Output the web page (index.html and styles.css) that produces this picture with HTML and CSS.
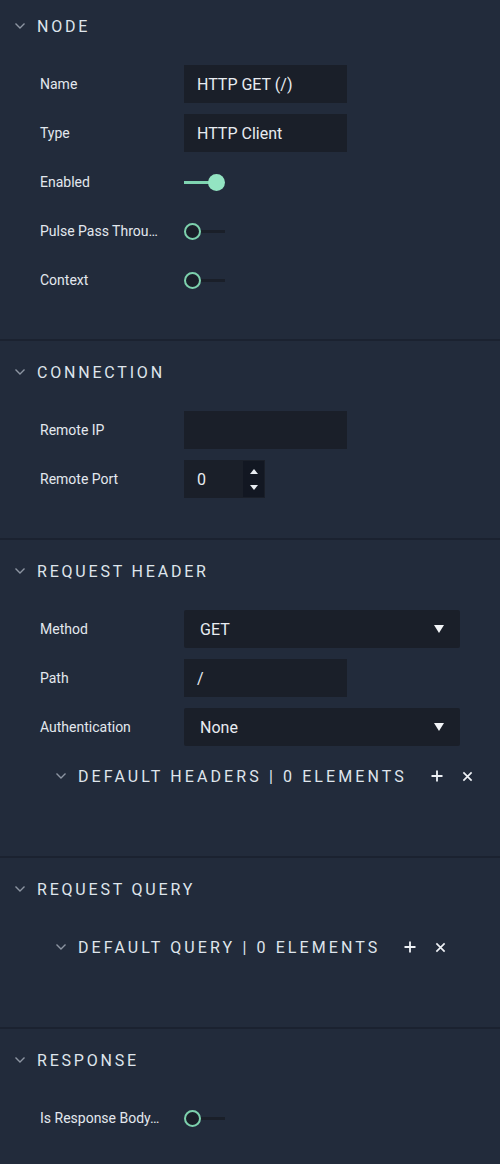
FILE: index.html
```html
<!DOCTYPE html>
<html lang="en">
<head>
<meta charset="utf-8">
<link rel="stylesheet" href="styles.css">
</head>
<body>
<div class="panel">
  <section class="section first">
    <div class="sec-head"><svg class="chev" viewBox="0 0 10 6"><path d="M0.5 0.5 L5 5 L9.5 0.5"/></svg><span class="sec-title">Node</span></div>
    <div class="rows">
      <div class="row"><span class="label">Name</span><div class="input">HTTP GET (/)</div></div>
      <div class="row"><span class="label">Type</span><div class="input">HTTP Client</div></div>
      <div class="row"><span class="label">Enabled</span><div class="toggle on"><span class="track"></span><span class="knob"></span></div></div>
      <div class="row"><span class="label">Pulse Pass Throu…</span><div class="toggle off"><span class="knob"></span><span class="track"></span></div></div>
      <div class="row"><span class="label">Context</span><div class="toggle off"><span class="knob"></span><span class="track"></span></div></div>
    </div>
  </section>
  <section class="section">
    <div class="sec-head"><svg class="chev" viewBox="0 0 10 6"><path d="M0.5 0.5 L5 5 L9.5 0.5"/></svg><span class="sec-title">Connection</span></div>
    <div class="rows">
      <div class="row"><span class="label">Remote IP</span><div class="input"></div></div>
      <div class="row"><span class="label">Remote Port</span>
        <div class="number"><span class="num-val">0</span><span class="spin"><svg viewBox="0 0 8 5" class="arr"><path d="M0 5 L4 0 L8 5Z"/></svg><svg viewBox="0 0 8 5" class="arr"><path d="M0 0 L8 0 L4 5Z"/></svg></span></div>
      </div>
    </div>
  </section>
  <section class="section">
    <div class="sec-head"><svg class="chev" viewBox="0 0 10 6"><path d="M0.5 0.5 L5 5 L9.5 0.5"/></svg><span class="sec-title">Request Header</span></div>
    <div class="rows">
      <div class="row"><span class="label">Method</span><div class="select"><span>GET</span><svg viewBox="0 0 10 8" class="caret"><path d="M0 0 L10 0 L5 8Z"/></svg></div></div>
      <div class="row"><span class="label">Path</span><div class="input">/</div></div>
      <div class="row"><span class="label">Authentication</span><div class="select"><span>None</span><svg viewBox="0 0 10 8" class="caret"><path d="M0 0 L10 0 L5 8Z"/></svg></div></div>
      <div class="sublist">
        <svg class="chev" viewBox="0 0 10 6"><path d="M0.5 0.5 L5 5 L9.5 0.5"/></svg><span class="sub-title">Default Headers | 0 Elements</span>
        <svg class="icon-btn" viewBox="0 0 12 12"><path d="M6 0.5 V11.5 M0.5 6 H11.5"/></svg>
        <svg class="icon-btn x" viewBox="0 0 12 12"><path d="M1.5 1.5 L10.5 10.5 M10.5 1.5 L1.5 10.5"/></svg>
      </div>
    </div>
  </section>
  <section class="section">
    <div class="sec-head"><svg class="chev" viewBox="0 0 10 6"><path d="M0.5 0.5 L5 5 L9.5 0.5"/></svg><span class="sec-title">Request Query</span></div>
    <div class="rows">
      <div class="sublist">
        <svg class="chev" viewBox="0 0 10 6"><path d="M0.5 0.5 L5 5 L9.5 0.5"/></svg><span class="sub-title">Default Query | 0 Elements</span>
        <svg class="icon-btn" viewBox="0 0 12 12"><path d="M6 0.5 V11.5 M0.5 6 H11.5"/></svg>
        <svg class="icon-btn x" viewBox="0 0 12 12"><path d="M1.5 1.5 L10.5 10.5 M10.5 1.5 L1.5 10.5"/></svg>
      </div>
    </div>
  </section>
  <section class="section last">
    <div class="sec-head"><svg class="chev" viewBox="0 0 10 6"><path d="M0.5 0.5 L5 5 L9.5 0.5"/></svg><span class="sec-title">Response</span></div>
    <div class="rows">
      <div class="row"><span class="label">Is Response Body…</span><div class="toggle off"><span class="knob"></span><span class="track"></span></div></div>
    </div>
  </section>
</div>
</body>
</html>
```
FILE: styles.css
```css
html, body {
  margin: 0;
  padding: 0;
  background: #222b3b;
}
body {
  font-family: Roboto, "Liberation Sans", sans-serif;
  color: #e3e8ee;
  width: 500px;
  min-height: 1164px;
}
.panel {
  display: flex;
  flex-direction: column;
}
.section {
  padding: 6px 0 40px;
  border-bottom: 2px solid #1b2230;
}
.section.first { padding-top: 1px; }
.section.last { border-bottom: none; }
.sec-head {
  height: 50px;
  display: flex;
  align-items: center;
  padding-left: 15px;
}
.chev {
  width: 10px;
  height: 6px;
  fill: none;
  stroke: #8d95a2;
  stroke-width: 1.4;
  flex: none;
}
.sec-title {
  margin-left: 12px;
  font-size: 16px;
  letter-spacing: 2.8px;
  text-transform: uppercase;
  color: #dfe5ec;
  font-weight: 400;
}
.rows {
  margin-top: 14px;
  display: flex;
  flex-direction: column;
  gap: 11px;
}
.row {
  height: 38px;
  display: flex;
  align-items: center;
  padding-left: 40px;
}
.label {
  width: 124px;
  margin-right: 20px;
  font-size: 14px;
  white-space: nowrap;
  color: #e3e8ee;
  flex: none;
}
.input {
  width: 163px;
  height: 38px;
  box-sizing: border-box;
  background: #1a1f29;
  padding-left: 13px;
  display: flex;
  align-items: center;
  font-size: 16px;
  color: #e8ecf1;
}
.select {
  width: 276px;
  height: 38px;
  box-sizing: border-box;
  background: #1a1f29;
  border-radius: 2px;
  padding: 0 16px 0 16px;
  display: flex;
  align-items: center;
  justify-content: space-between;
  font-size: 16px;
  color: #e8ecf1;
}
.caret {
  width: 10px;
  height: 8px;
  fill: #f2f4f7;
}
.number {
  width: 81px;
  height: 38px;
  display: flex;
  background: #1a1f29;
}
.num-val {
  flex: 1;
  padding-left: 13px;
  display: flex;
  align-items: center;
  font-size: 16px;
  color: #e8ecf1;
}
.spin {
  width: 21px;
  margin: 1px 1px 1px 0;
  background: #121722;
  display: flex;
  flex-direction: column;
  align-items: center;
  justify-content: center;
  gap: 11px;
}
.arr {
  width: 8px;
  height: 5px;
  fill: #e8ecf1;
}
.toggle {
  width: 41px;
  height: 18px;
  display: flex;
  align-items: center;
}
.toggle .knob {
  width: 17px;
  height: 17px;
  box-sizing: border-box;
  border-radius: 50%;
  flex: none;
}
.toggle .track {
  height: 3px;
  flex: 1;
}
.toggle.on .track { background: #7fd4b1; margin-right: -1px; }
.toggle.on .knob { background: #93e4c2; }
.toggle.off .knob { background: #1a1f29; border: 2.5px solid #7dd1ad; }
.toggle.off .track { background: #1a1f29; }
.sublist {
  height: 38px;
  display: flex;
  align-items: center;
  padding-left: 56px;
  margin-bottom: 21px;
}
.sub-title {
  margin-left: 12px;
  font-size: 16px;
  letter-spacing: 3.1px;
  text-transform: uppercase;
  color: #dfe5ec;
  white-space: nowrap;
}
.icon-btn {
  width: 12px;
  height: 12px;
  fill: none;
  stroke: #eef1f5;
  stroke-width: 1.8;
  margin-left: 24px;
  flex: none;
}
.icon-btn.x {
  width: 11px;
  height: 11px;
  margin-left: 19px;
}
```
